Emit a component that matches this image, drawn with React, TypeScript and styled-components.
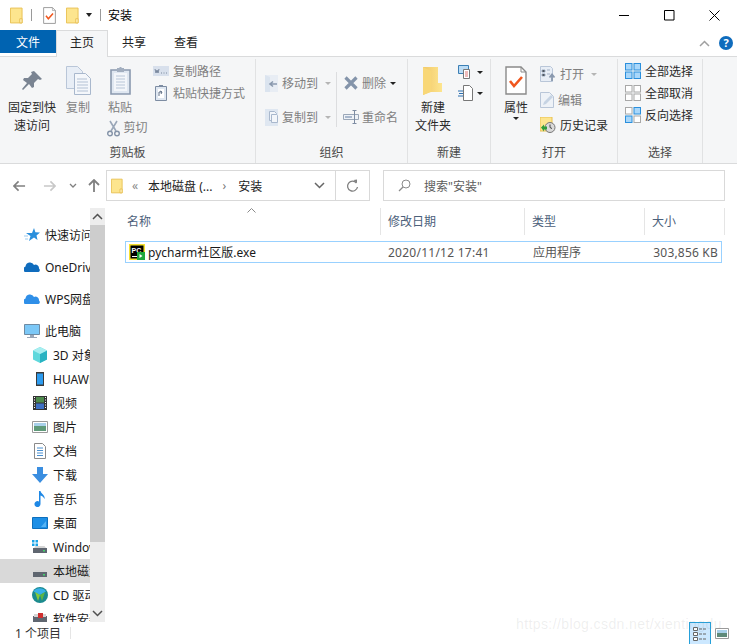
import React from "react";
import styled, { createGlobalStyle } from "styled-components";

const GlobalStyle = createGlobalStyle`
  html, body { margin: 0; padding: 0; background: #fff; }
  body { font-family: "Noto Sans", "Noto Sans CJK SC", sans-serif; font-size: 12px; color: #1a1a1a; }
  * { box-sizing: border-box; }
`;

const Window = styled.div`
  width: 737px;
  height: 644px;
  overflow: hidden;
  position: relative;
  display: flex;
  flex-direction: column;
`;
const Spacer = styled.span<{ $w: number }>`
  width: ${(p) => p.$w}px;
  flex: none;
`;

/* title bar */
const TitleBar = styled.div`
  height: 30px;
  display: flex;
  align-items: center;
  padding-left: 10px;
`;
const TitleSep = styled.span<{ $r?: number }>`
  width: 1px;
  height: 12px;
  background: #9a9a9a;
  margin: 0 ${(p) => p.$r ?? 11}px 0 8px;
`;
const TitleText = styled.span`
  font-size: 12px;
  color: #000;
`;
const WinButtons = styled.div`
  margin-left: auto;
  display: flex;
`;
const WinButton = styled.div`
  width: 45px;
  height: 30px;
  display: flex;
  align-items: center;
  justify-content: center;
`;

/* tabs */
const TabRow = styled.div`
  height: 26px;
  display: flex;
  align-items: flex-start;
  position: relative;
  z-index: 1;
`;
const FileTab = styled.div`
  width: 56px;
  height: 23px;
  background: #0063b1;
  color: #fff;
  display: flex;
  align-items: center;
  justify-content: center;
`;
const Tab = styled.div<{ $active?: boolean }>`
  width: 52px;
  height: ${(p) => (p.$active ? "27px" : "23px")};
  display: flex;
  align-items: center;
  justify-content: center;
  padding-bottom: ${(p) => (p.$active ? "4px" : "0")};
  color: #222;
  background: ${(p) => (p.$active ? "#f5f6f7" : "transparent")};
  border: ${(p) => (p.$active ? "1px solid #dadbdc" : "none")};
  border-bottom: none;
`;
const TabRight = styled.div`
  margin-left: auto;
  display: flex;
  align-items: center;
  gap: 9px;
  height: 26px;
  padding-right: 4px;
`;
const Help = styled.div`
  width: 14px;
  height: 14px;
  border-radius: 50%;
  background: #0f6cbd;
  color: #fff;
  font-size: 11px;
  font-weight: 700;
  line-height: 14px;
  text-align: center;
`;

/* ribbon */
const Ribbon = styled.div`
  height: 108px;
  flex: none;
  display: flex;
  background: #f5f6f7;
  border-top: 1px solid #dadbdc;
  border-bottom: 1px solid #dadbdc;
  padding-top: 2px;
`;
const Group = styled.div<{ $w: number }>`
  width: ${(p) => p.$w}px;
  flex: none;
  display: flex;
  flex-direction: column;
  border-right: 1px solid #e1e2e3;
`;
const GroupBody = styled.div`
  flex: 1;
  display: flex;
  min-height: 0;
`;
const GroupLabel = styled.div`
  height: 20px;
  line-height: 20px;
  text-align: center;
  color: #4a4a4a;
`;
const BigButton = styled.div<{ $w: number; $dim?: boolean; $ml?: number }>`
  width: ${(p) => p.$w}px;
  margin-left: ${(p) => p.$ml ?? 0}px;
  display: flex;
  flex-direction: column;
  align-items: center;
  text-align: center;
  line-height: 18px;
  color: ${(p) => (p.$dim ? "#7f7f7f" : "#2a2a2a")};
`;
const BigIcon = styled.div`
  height: 37px;
  display: flex;
  align-items: center;
  justify-content: center;
  margin: 3px 0 0;
`;
const Stack = styled.div<{ $ml: number; $gap: number; $pt: number }>`
  margin-left: ${(p) => p.$ml}px;
  padding-top: ${(p) => p.$pt}px;
  display: flex;
  flex-direction: column;
  gap: ${(p) => p.$gap}px;
`;
const SmallButton = styled.div<{ $dim?: boolean }>`
  display: flex;
  align-items: center;
  gap: 4px;
  height: 18px;
  white-space: nowrap;
  color: ${(p) => (p.$dim ? "#7f7f7f" : "#2a2a2a")};
`;
const CutRow = styled(SmallButton)`
  margin: 2px 0 0 14px;
`;
const InnerSep = styled.div`
  width: 1px;
  height: 55px;
  background: #dcdddf;
  margin: 13px 0 0 5px;
`;
const Tight = styled.span`
  display: flex;
  margin: 0 -1px;
`;
const Wide = styled.span`
  display: flex;
  margin: 0 2px;
`;
const Caret = styled.span<{ $c?: string; $ml?: number; $h?: number }>`
  display: inline-block;
  width: 0;
  height: 0;
  margin-left: ${(p) => p.$ml ?? 3}px;
  border-left: 3px solid transparent;
  border-right: 3px solid transparent;
  border-top: ${(p) => p.$h ?? 3}px solid ${(p) => p.$c ?? "#222"};
`;

/* address row */
const AddressRow = styled.div`
  height: 44px;
  flex: none;
  display: flex;
  align-items: center;
  padding: 0 12px 1px 13px;
`;
const NavArrows = styled.div`
  width: 93px;
  flex: none;
  display: flex;
  align-items: center;
`;
const AddressBox = styled.div`
  width: 264px;
  height: 31px;
  flex: none;
  display: flex;
  align-items: center;
  border: 1px solid #d9d9d9;
  padding-left: 4px;
  color: #222;
`;
const Crumb = styled.span<{ $ml: number; $c?: string }>`
  display: flex;
  margin-left: ${(p) => p.$ml}px;
  white-space: nowrap;
  color: ${(p) => p.$c ?? "inherit"};
`;
const RefreshCell = styled.div`
  margin-left: auto;
  width: 34px;
  height: 100%;
  border-left: 1px solid #d9d9d9;
  display: flex;
  align-items: center;
  justify-content: center;
`;
const SearchBox = styled.div`
  margin-left: 13px;
  width: 342px;
  height: 31px;
  flex: none;
  display: flex;
  align-items: center;
  gap: 13px;
  padding-left: 14px;
  border: 1px solid #d9d9d9;
  color: #5c5c5c;
`;

/* main */
const Main = styled.div`
  flex: 1;
  min-height: 0;
  display: flex;
`;
const NavPane = styled.div`
  width: 90px;
  flex: none;
  overflow: hidden;
  padding-top: 15px;
`;
const NavRow = styled.div<{ $sub?: boolean; $gap?: boolean; $sel?: boolean }>`
  height: 24px;
  margin-top: ${(p) => (p.$gap ? "8px" : "0")};
  padding-left: ${(p) => (p.$sub ? "32px" : "24px")};
  display: flex;
  align-items: center;
  gap: 5px;
  white-space: nowrap;
  background: ${(p) => (p.$sel ? "#d9d9d9" : "transparent")};
  color: #1a1a1a;
`;
const NavIcon = styled.span`
  width: 16px;
  height: 16px;
  flex: none;
  display: flex;
`;
const ScrollBar = styled.div`
  width: 15px;
  flex: none;
  background: #ededed;
  display: flex;
  flex-direction: column;
`;
const ScrollArrow = styled.div`
  height: 17px;
  flex: none;
  display: flex;
  align-items: center;
  justify-content: center;
`;
const ScrollThumb = styled.div`
  height: 317px;
  flex: none;
  background: #cdcdcd;
`;
const ScrollSpace = styled.div`
  flex: 1;
`;
const ListPane = styled.div`
  flex: 1;
  min-width: 0;
  padding-left: 19px;
  position: relative;
`;
const HeaderRow = styled.div`
  height: 27px;
  display: flex;
`;
const HeaderCell = styled.div<{ $w: number; $pl?: number }>`
  width: ${(p) => p.$w}px;
  flex: none;
  padding: 0 0 2px ${(p) => p.$pl ?? 7}px;
  display: flex;
  align-items: center;
  color: #4c607a;
  border-right: 1px solid #e5e5e5;
`;
const FileRow = styled.div`
  margin: 6px 0 0 1px;
  width: 597px;
  height: 22px;
  display: flex;
  align-items: center;
  border: 1px solid #99d1ff;
  padding-left: 3px;
  color: #333;
`;
const SortCaret = styled.svg`
  position: absolute;
  left: 142px;
  top: 0;
`;
const FileName = styled.div`
  width: 240px;
  flex: none;
  display: flex;
  align-items: center;
  gap: 3px;
  color: #1a1a1a;
`;
const Cell = styled.div<{ $w: number; $right?: boolean; $pl?: number; $ls?: number }>`
  width: ${(p) => p.$w}px;
  flex: none;
  white-space: nowrap;
  padding-left: ${(p) => p.$pl ?? 0}px;
  letter-spacing: ${(p) => p.$ls ?? 0}px;
  text-align: ${(p) => (p.$right ? "right" : "left")};
  color: #555;
`;

/* status */
const StatusBar = styled.div`
  height: 22px;
  flex: none;
  display: flex;
  align-items: center;
  padding-left: 15px;
  color: #333;
`;
const StatusSep = styled.span`
  width: 1px;
  height: 12px;
  background: #e5e5e5;
  margin-left: 9px;
`;
const ViewButtons = styled.div`
  margin-left: auto;
  height: 22px;
  display: flex;
  align-items: center;
  padding-right: 8px;
`;
const DetailsButton = styled.div`
  width: 22px;
  height: 22px;
  background: #cce8ff;
  border: 1px solid #26a0da;
  border-bottom: none;
  display: flex;
  align-items: center;
  justify-content: center;
  margin-right: 4px;
`;
const Watermark = styled.div`
  position: absolute;
  left: 516px;
  top: 616px;
  font-family: "Liberation Sans", sans-serif;
  font-size: 14px;
  letter-spacing: 0.4px;
  color: rgba(120, 120, 120, 0.13);
  white-space: nowrap;
`;

const Folder = ({ w = 13, h = 17 }: { w?: number; h?: number }) => (
  <svg width={w} height={h} viewBox="0 0 14 17">
    <path d="M.5.5h12.5v16H.5z" fill="#fde58e" stroke="#e8bf50" />
    <path d="M10.5 12v4.5H13V12z" fill="#fff3c4" stroke="#e8bf50" />
  </svg>
);
const Check = ({ w = 13, h = 17 }: { w?: number; h?: number }) => (
  <svg width={w} height={h} viewBox="0 0 22 29">
    <path d="M1 1h15l5 5v22H1z" fill="#fff" stroke="#8a8a8a" strokeWidth="1.4" />
    <path d="M16 1v5h5" fill="none" stroke="#8a8a8a" />
    <path d="M5 15l4 5 8-9" fill="none" stroke="#f0561d" strokeWidth="2.6" />
  </svg>
);
const Pin = () => (
  <svg width="22" height="22" viewBox="0 0 22 22">
    <path d="M13 1l8 8-2 1-2-1-4 4 0 4-2 1-3-4-6 6-1-1 5-6-4-3 1-2 4 0 4-4-1-2z" fill="#7a8492" />
  </svg>
);
const CopyIcon = () => (
  <svg width="25" height="29" viewBox="0 0 25 29">
    <path d="M.5.5h11l5 5v17H.5z" fill="#e8eef6" stroke="#b9c6d8" />
    <path d="M8.5 7.5h11l5 5v16h-16z" fill="#f4f7fb" stroke="#a9b8cd" />
    <path d="M11 13h10M11 16h11M11 19h11M11 22h11M11 25h11" stroke="#b3c1d4" />
  </svg>
);
const Clipboard = () => (
  <svg width="21" height="29" viewBox="0 0 21 29">
    <path d="M1 4h19v24H1z" fill="#dfe7f1" stroke="#8a99ae" strokeWidth="1.6" />
    <path d="M4 7h13v18H4z" fill="#f3f6fa" />
    <path d="M6 10h9M6 13h9M6 16h9M6 19h9M6 22h9" stroke="#b8c6d8" />
    <path d="M7 2h2l1-1h1l1 1h2v4H7z" fill="#a2aebf" />
  </svg>
);
const Scissors = () => (
  <svg width="13" height="17" viewBox="0 0 13 17">
    <path d="M3 1l6 10M10 1L4 11" stroke="#9aa7b8" strokeWidth="1.6" fill="none" />
    <circle cx="3" cy="13.5" r="2.3" fill="none" stroke="#8493a8" strokeWidth="1.4" />
    <circle cx="10" cy="13.5" r="2.3" fill="none" stroke="#8493a8" strokeWidth="1.4" />
  </svg>
);
const PathIcon = () => (
  <svg width="16" height="10" viewBox="0 0 16 10">
    <path d="M0 0h16v10H0z" fill="#d8e0ec" />
    <path d="M2 3l1 4 1-3 1 3 1-4M8 7h1M10.5 7h1M13 7h1" stroke="#64748b" fill="none" strokeWidth=".8" />
  </svg>
);
const ShortcutIcon = () => (
  <Wide>
    <svg width="12" height="16" viewBox="0 0 12 16">
      <path d="M.5 1.5h11v14H.5z" fill="#dfe7f1" stroke="#7d8ca2" />
      <path d="M3 4h6v9H3z" fill="#fff" />
      <path d="M4 11V7h3M5 6l2 1-1 2" stroke="#5f6f86" fill="none" />
      <path d="M4 0h4v2H4z" fill="#7d8ca2" />
    </svg>
  </Wide>
);
const MoveIcon = () => (
  <svg width="13" height="17" viewBox="0 0 13 17">
    <path d="M0 0l5 2v15H0z" fill="#d4deea" />
    <path d="M0 0h13v17H0z" fill="#dfe7f1" opacity=".6" />
    <path d="M12 9H6M8 6.5L5 9l3 2.5" stroke="#8a99ae" strokeWidth="1.6" fill="none" />
  </svg>
);
const CopyToIcon = () => (
  <svg width="13" height="17" viewBox="0 0 13 17">
    <path d="M0 0h13v17H0z" fill="#dfe7f1" />
    <path d="M4.5 2.5h5l2 2v7h-7z" fill="#f3f6fa" stroke="#a9b8cd" />
    <path d="M6.5 5.5h5l1 1v7h-6z" fill="#f3f6fa" stroke="#a9b8cd" />
  </svg>
);
const DeleteIcon = () => (
  <svg width="14" height="14" viewBox="0 0 14 14">
    <path d="M1.5 1.5l11 11M12.5 1.5l-11 11" stroke="#8494aa" strokeWidth="3.2" />
  </svg>
);
const RenameIcon = () => (
  <Tight>
    <svg width="16" height="14" viewBox="0 0 16 14">
      <path d="M.5 4.5h15v5H.5z" fill="#eef2f7" stroke="#9aa7b8" />
      <path d="M2 6h7v2H2z" fill="#a9b8cd" />
      <path d="M11.5 1v12M9.5.5h4M9.5 13.5h4" stroke="#7d8ca2" fill="none" />
    </svg>
  </Tight>
);
const BigFolder = () => (
  <svg width="20" height="28" viewBox="0 0 20 28">
    <defs>
      <linearGradient id="bf" x1="0" x2="1" y1="0" y2="0">
        <stop offset="0" stopColor="#f2c869" />
        <stop offset="1" stopColor="#fde58e" />
      </linearGradient>
    </defs>
    <path d="M0 0h15v16h4v9H7l-7 3z" fill="url(#bf)" />
    <path d="M0 0l8 4v21l-8 3z" fill="#f8d777" />
  </svg>
);
const NewItemIcon = () => (
  <svg width="15" height="15" viewBox="0 0 15 15">
    <path d="M.5.5h10v8H.5z" fill="#bcdcf5" stroke="#3b7fb5" />
    <path d="M5.5 4.5h6v9h-6z" fill="#fff" stroke="#777" />
    <path d="M7 7h3M7 9h3M7 11h3" stroke="#d77" />
  </svg>
);
const EasyAccessIcon = () => (
  <svg width="15" height="16" viewBox="0 0 15 16">
    <path d="M5.5.5h6l3 3v12h-9z" fill="#fff" stroke="#777" />
    <path d="M0 6h5M1 8.5h4M0 11h5" stroke="#2a6fb0" />
  </svg>
);
const OpenIcon = () => (
  <svg width="16" height="16" viewBox="0 0 16 16">
    <path d="M.5.5h10l2 2v13H.5z" fill="#e8eef6" stroke="#b9c6d8" />
    <path d="M2 4h3v2H2zM2 8h3v2H2zM7 4h3M7 8h3" stroke="#a2b1c5" />
    <path d="M12 15V9M9.5 11.5L12 8.5l2.5 3" stroke="#8a99ae" strokeWidth="1.8" fill="none" />
  </svg>
);
const EditIcon = () => (
  <svg width="14" height="16" viewBox="0 0 14 16">
    <path d="M.5.5h9l4 4v11H.5z" fill="#eef2f7" stroke="#b9c6d8" />
    <path d="M3 13l1-3 7-7 2 2-7 7z" fill="#c6d3e3" />
  </svg>
);
const HistoryIcon = () => (
  <svg width="16" height="16" viewBox="0 0 16 16">
    <path d="M0 0h12v14H0z" fill="#fde58e" stroke="#e8bf50" />
    <circle cx="10" cy="10.5" r="5" fill="#d9d9d9" stroke="#777" />
    <path d="M10 7.5v3l2 1" stroke="#444" fill="none" />
    <path d="M1 10.5l3-3v2h3v3H4v2z" fill="#2e9c3a" />
  </svg>
);
const SelectGrid = ({ on, c }: { on: number[]; c: string }) => (
  <svg width="16" height="16" viewBox="0 0 16 16">
    {[0, 1, 2, 3].map((i) => {
      const x = i % 2 ? 9 : 0.5;
      const y = i > 1 ? 9 : 0.5;
      const active = on.includes(i);
      return (
        <rect
          key={i}
          x={x}
          y={y}
          width="6.5"
          height="6.5"
          fill={active ? "#a9d7fa" : "#fff"}
          stroke={active ? c : "#a8a8a8"}
        />
      );
    })}
  </svg>
);
const Arrow = ({ d, c }: { d: string; c: string }) => (
  <svg width="13" height="12" viewBox="0 0 14 12">
    <path d={d} stroke={c} strokeWidth="1.8" fill="none" />
  </svg>
);
const Chevron = ({ c = "#555", up = false }: { c?: string; up?: boolean }) => (
  <svg width="11" height="7" viewBox="0 0 11 7">
    <path d={up ? "M1 6l4.5-4.5L10 6" : "M1 1l4.5 4.5L10 1"} stroke={c} strokeWidth="1.5" fill="none" />
  </svg>
);
const PyCharm = () => (
  <svg width="16" height="16" viewBox="0 0 16 16">
    <path d="M0 0h16v16H0z" fill="#f5e12f" />
    <path d="M1.5 1.5h13v13h-13z" fill="#000" />
    <text x="2.5" y="8.5" fontFamily="Liberation Sans" fontWeight="700" fontSize="7" fill="#fff">PC</text>
    <path d="M3 12.5h5" stroke="#fff" />
    <path d="M8 8h8v8H8z" fill="#21a73d" />
    <path d="M10.5 10l3 2-3 2z" fill="#fff" />
  </svg>
);

const Star = () => (
  <svg width="16" height="16" viewBox="0 0 16 16">
    <path d="M10 1l1.4 4.3L16 5.5l-3.5 3 1 4.5L10 10.5 5 14l1.5-5L2 6h6z" fill="#2a8fdc" />
    <path d="M0 9h4M1 12h3" stroke="#9ccbee" />
  </svg>
);
const Cloud = ({ c = "#0f6cbd" }: { c?: string }) => (
  <svg width="16" height="16" viewBox="0 0 16 16">
    <path d="M1 13a3 3 0 0 1 .5-5.5A4.5 4.5 0 0 1 10 6a3.5 3.5 0 0 1 5 3.5 2 2 0 0 1-.5 3.5z" fill={c} />
  </svg>
);
const PcIcon = () => (
  <svg width="16" height="16" viewBox="0 0 16 16">
    <path d="M.5 1.5h15v10H.5z" fill="#7cc8f7" stroke="#6e8ba3" />
    <path d="M6 12h4v2H6zM3 14h10v1H3z" fill="#9aa7b8" />
  </svg>
);
const Cube = () => (
  <svg width="16" height="16" viewBox="0 0 16 16">
    <path d="M8 0l7 3.5v9L8 16l-7-3.5v-9z" fill="#5fd8dc" />
    <path d="M8 7l7-3.5v9L8 16z" fill="#29b3c2" />
    <path d="M8 0l7 3.5L8 7 1 3.5z" fill="#a7eef0" />
  </svg>
);
const Phone = () => (
  <svg width="16" height="16" viewBox="0 0 16 16">
    <path d="M4 1h8v14H4z" fill="#3a3a3a" />
    <path d="M5 2.5h6v11H5z" fill="#2d9cf0" />
  </svg>
);
const Film = () => (
  <svg width="16" height="16" viewBox="0 0 16 16">
    <path d="M1 1h14v14H1z" fill="#333" />
    <path d="M4 2h8v5.5H4z" fill="#4d8a4c" />
    <path d="M4 8.5h8V14H4z" fill="#3d6fc4" />
    <path d="M2 2.5h1M2 5h1M2 7.5h1M2 10h1M2 12.5h1M13 2.5h1M13 5h1M13 7.5h1M13 10h1M13 12.5h1" stroke="#fff" />
  </svg>
);
const Picture = () => (
  <svg width="16" height="16" viewBox="0 0 16 16">
    <path d="M.5 2.5h15v11H.5z" fill="#fff" stroke="#9a9a9a" />
    <path d="M2 4h12v3H2z" fill="#a8d0ea" />
    <path d="M2 7h12v5H2z" fill="#5f9a7a" />
  </svg>
);
const DocIcon = () => (
  <svg width="16" height="16" viewBox="0 0 16 16">
    <path d="M2.5.5h8l3 3v12h-11z" fill="#fff" stroke="#8a8a8a" />
    <path d="M5 5h6M5 7.5h6M5 10h6M5 12.5h6" stroke="#4a90d0" />
  </svg>
);
const Download = () => (
  <svg width="16" height="16" viewBox="0 0 16 16">
    <path d="M5 0h6v7h5l-8 9-8-9h5z" fill="#3a8ee0" />
  </svg>
);
const Music = () => (
  <svg width="16" height="16" viewBox="0 0 16 16">
    <path d="M7 0h1.5c.5 3 5 4 4 8-1-2-2-3-4-3.5V13a3 3 0 1 1-1.5-2.5z" fill="#1e88e5" />
  </svg>
);
const Desktop = () => (
  <svg width="16" height="16" viewBox="0 0 16 16">
    <path d="M.5 2.5h15v11H.5z" fill="#1d8fe6" stroke="#0d6fbd" />
    <path d="M9 12l5-6v6z" fill="#56b4f5" />
  </svg>
);
const Drive = ({ win = false }: { win?: boolean }) => (
  <svg width="16" height="16" viewBox="0 0 16 16">
    {win && <path d="M0 1h2.5v2.5H0zM3.5 1H6v2.5H3.5zM0 4.5h2.5V7H0zM3.5 4.5H6V7H3.5z" fill="#19a3e8" />}
    <path d="M2 9l1.5-2h9L14 9z" fill="#d5d5d5" />
    <path d="M1 9h14v5H1z" fill="#5f6670" />
    <path d="M11 11h2v1.5h-2z" fill="#43d16a" />
  </svg>
);
const Disc = () => (
  <svg width="16" height="16" viewBox="0 0 16 16">
    <circle cx="8" cy="8" r="8" fill="#1b8a8f" />
    <path d="M1.5 4.5L8 8l6-3.5A7.5 7.5 0 0 0 1.5 4.5z" fill="#37b0e8" />
    <path d="M3 5l5 3-2 6z" fill="#83c93c" />
    <path d="M13 5L8 8l2 6z" fill="#5db543" />
  </svg>
);
const RedDrive = () => (
  <svg width="16" height="16" viewBox="0 0 16 16">
    <path d="M1 5h14v9H1z" fill="#5f6670" />
    <path d="M2 3h12v3H2z" fill="#d5d5d5" />
    <path d="M6 2h5v5H6z" fill="#d02f2f" />
  </svg>
);

const navItems: { icon: React.ReactNode; label: string; sub?: boolean; gap?: boolean; sel?: boolean }[] = [
  { icon: <Star />, label: "快速访问" },
  { icon: <Cloud />, label: "OneDrive", gap: true },
  { icon: <Cloud c="#2f8fe8" />, label: "WPS网盘", gap: true },
  { icon: <PcIcon />, label: "此电脑", gap: true },
  { icon: <Cube />, label: "3D 对象", sub: true },
  { icon: <Phone />, label: "HUAWEI", sub: true },
  { icon: <Film />, label: "视频", sub: true },
  { icon: <Picture />, label: "图片", sub: true },
  { icon: <DocIcon />, label: "文档", sub: true },
  { icon: <Download />, label: "下载", sub: true },
  { icon: <Music />, label: "音乐", sub: true },
  { icon: <Desktop />, label: "桌面", sub: true },
  { icon: <Drive win />, label: "Windows", sub: true },
  { icon: <Drive />, label: "本地磁盘", sub: true, sel: true },
  { icon: <Disc />, label: "CD 驱动器", sub: true },
  { icon: <RedDrive />, label: "软件安装", sub: true },
];

export default function App() {
  return (
    <Window>
      <GlobalStyle />
      <TitleBar>
        <Folder />
        <TitleSep />
        <Check />
        <Spacer $w={10} />
        <Folder />
        <Caret $ml={7} $h={4} />
        <TitleSep $r={7} />
        <TitleText>安装</TitleText>
        <WinButtons>
          <WinButton>
            <svg width="11" height="11" viewBox="0 0 11 11"><path d="M0 5.5h10" stroke="#000" /></svg>
          </WinButton>
          <WinButton>
            <svg width="11" height="11" viewBox="0 0 11 11"><path d="M.5.5H10V10H.5z" stroke="#000" fill="none" /></svg>
          </WinButton>
          <WinButton>
            <svg width="11" height="11" viewBox="0 0 11 11"><path d="M.5.5l10 10M10.5.5l-10 10" stroke="#000" fill="none" /></svg>
          </WinButton>
        </WinButtons>
      </TitleBar>

      <TabRow>
        <FileTab>文件</FileTab>
        <Tab $active>主页</Tab>
        <Tab>共享</Tab>
        <Tab>查看</Tab>
        <TabRight>
          <Chevron c="#a0a0a0" up />
          <Help>?</Help>
        </TabRight>
      </TabRow>

      <Ribbon>
        <Group $w={256}>
          <GroupBody>
            <BigButton $w={48} $ml={8}>
              <BigIcon><Pin /></BigIcon>
              固定到快<br />速访问
            </BigButton>
            <BigButton $w={36} $ml={4} $dim>
              <BigIcon><CopyIcon /></BigIcon>
              复制
            </BigButton>
            <BigButton $w={44} $ml={2} $dim>
              <BigIcon><Clipboard /></BigIcon>
              粘贴
              <CutRow $dim><Scissors />剪切</CutRow>
            </BigButton>
            <Stack $ml={11} $gap={4} $pt={3}>
              <SmallButton $dim><PathIcon />复制路径</SmallButton>
              <SmallButton $dim><ShortcutIcon />粘贴快捷方式</SmallButton>
            </Stack>
          </GroupBody>
          <GroupLabel>剪贴板</GroupLabel>
        </Group>
        <Group $w={152}>
          <GroupBody>
            <Stack $ml={9} $gap={16} $pt={15}>
              <SmallButton $dim><MoveIcon />移动到<Caret $c="#b5b5b5" /></SmallButton>
              <SmallButton $dim><CopyToIcon />复制到<Caret $c="#b5b5b5" /></SmallButton>
            </Stack>
            <InnerSep />
            <Stack $ml={7} $gap={16} $pt={15}>
              <SmallButton $dim><DeleteIcon />删除<Caret $ml={0} /></SmallButton>
              <SmallButton $dim><RenameIcon />重命名</SmallButton>
            </Stack>
          </GroupBody>
          <GroupLabel>组织</GroupLabel>
        </Group>
        <Group $w={83}>
          <GroupBody>
            <BigButton $w={50}>
              <BigIcon><BigFolder /></BigIcon>
              新建<br />文件夹
            </BigButton>
            <Stack $ml={0} $gap={3} $pt={4}>
              <SmallButton><NewItemIcon /><Caret $ml={0} /></SmallButton>
              <SmallButton><EasyAccessIcon /><Caret $ml={0} /></SmallButton>
            </Stack>
          </GroupBody>
          <GroupLabel>新建</GroupLabel>
        </Group>
        <Group $w={127}>
          <GroupBody>
            <BigButton $w={50}>
              <BigIcon><Check w={22} h={29} /></BigIcon>
              属性
              <Caret $ml={0} />
            </BigButton>
            <Stack $ml={-1} $gap={7.5} $pt={6}>
              <SmallButton $dim><OpenIcon />打开<Caret $c="#b5b5b5" /></SmallButton>
              <SmallButton $dim><EditIcon />编辑</SmallButton>
              <SmallButton><HistoryIcon />历史记录</SmallButton>
            </Stack>
          </GroupBody>
          <GroupLabel>打开</GroupLabel>
        </Group>
        <Group $w={85}>
          <GroupBody>
            <Stack $ml={7} $gap={4} $pt={3}>
              <SmallButton><SelectGrid on={[0, 1, 2, 3]} c="#2b8fdc" />全部选择</SmallButton>
              <SmallButton><SelectGrid on={[]} c="#2b8fdc" />全部取消</SmallButton>
              <SmallButton><SelectGrid on={[1, 2]} c="#2b8fdc" />反向选择</SmallButton>
            </Stack>
          </GroupBody>
          <GroupLabel>选择</GroupLabel>
        </Group>
      </Ribbon>

      <AddressRow>
        <NavArrows>
          <Arrow d="M13 6H1M6 1L1 6l5 5" c="#808080" />
          <Spacer $w={17} />
          <Arrow d="M1 6h12M8 1l5 5-5 5" c="#c8c8c8" />
          <Spacer $w={13} />
          <svg width="8" height="6" viewBox="0 0 8 6"><path d="M1 1l3 3 3-3" stroke="#808080" strokeWidth="1.3" fill="none" /></svg>
          <Spacer $w={11} />
          <svg width="12" height="14" viewBox="0 0 12 14"><path d="M6 13V1M1 6l5-5 5 5" stroke="#808080" strokeWidth="1.8" fill="none" /></svg>
        </NavArrows>
        <AddressBox>
          <Folder w={12} h={16} />
          <Crumb $ml={9} $c="#888">«</Crumb>
          <Crumb $ml={10}>本地磁盘 (...</Crumb>
          <Crumb $ml={10} $c="#777">›</Crumb>
          <Crumb $ml={12}>安装</Crumb>
          <Crumb $ml={52}><Chevron c="#666" /></Crumb>
          <RefreshCell>
            <svg width="13" height="14" viewBox="0 0 13 14">
              <path d="M10.5 4A5 5 0 1 0 11.5 8" stroke="#808080" strokeWidth="1.3" fill="none" />
              <path d="M7.5 1L11 .5V4z" fill="#808080" />
            </svg>
          </RefreshCell>
        </AddressBox>
        <SearchBox>
          <svg width="13" height="13" viewBox="0 0 13 13">
            <circle cx="8" cy="5" r="4" stroke="#8a8a8a" fill="none" />
            <path d="M5 8l-4 4" stroke="#8a8a8a" strokeWidth="1.2" />
          </svg>
          搜索"安装"
        </SearchBox>
      </AddressRow>

      <Main>
        <NavPane>
          {navItems.map((it) => (
            <NavRow key={it.label} $sub={it.sub} $gap={it.gap} $sel={it.sel}>
              <NavIcon>{it.icon}</NavIcon>
              {it.label}
            </NavRow>
          ))}
        </NavPane>
        <ScrollBar>
          <ScrollArrow><Chevron c="#505050" up /></ScrollArrow>
          <ScrollThumb />
          <ScrollSpace />
          <ScrollArrow><Chevron c="#505050" /></ScrollArrow>
        </ScrollBar>
        <ListPane>
          <SortCaret width="9" height="5" viewBox="0 0 9 5">
            <path d="M.5 4.5l4-4 4 4" stroke="#8a8a8a" fill="none" />
          </SortCaret>
          <HeaderRow>
            <HeaderCell $w={257} $pl={3}>名称</HeaderCell>
            <HeaderCell $w={144}>修改日期</HeaderCell>
            <HeaderCell $w={120}>类型</HeaderCell>
            <HeaderCell $w={80}>大小</HeaderCell>
          </HeaderRow>
          <FileRow>
            <FileName><PyCharm />pycharm社区版.exe</FileName>
            <Cell $w={164} $pl={19} $ls={0.25}>2020/11/12 17:41</Cell>
            <Cell $w={120}>应用程序</Cell>
            <Cell $w={65} $right $ls={0.2}>303,856 KB</Cell>
          </FileRow>
        </ListPane>
      </Main>

      <StatusBar>
        1 个项目
        <StatusSep />
        <ViewButtons>
          <DetailsButton>
            <svg width="16" height="16" viewBox="0 0 16 16">
              <path d="M1.5 1.5h4v3h-4zM1.5 6.5h4v3h-4zM1.5 11.5h4v3h-4z" fill="#fff" stroke="#666" />
              <path d="M7 3h8M7 8h8M7 13h8" stroke="#666" strokeDasharray="3 1" />
            </svg>
          </DetailsButton>
          <svg width="14" height="11" viewBox="0 0 14 11">
            <path d="M.5.5h13v10H.5z" fill="#fff" stroke="#9a9a9a" />
            <path d="M2 2h10v3H2z" fill="#a8d0ea" />
            <path d="M2 5h10v4H2z" fill="#5f8a7a" />
          </svg>
        </ViewButtons>
      </StatusBar>

      <Watermark>https://blog.csdn.net/xientingdu</Watermark>
    </Window>
  );
}
